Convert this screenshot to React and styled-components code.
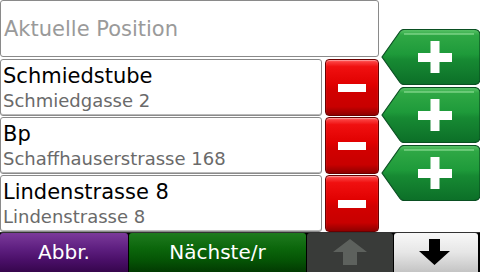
import React from "react";
import styled, { createGlobalStyle } from "styled-components";

const Global = createGlobalStyle`
  html, body { margin: 0; padding: 0; background: #fff; }
  body { width: 480px; height: 272px; overflow: hidden; font-family: "DejaVu Sans", "Liberation Sans", sans-serif; }
`;

const Screen = styled.div`
  width: 480px;
  height: 272px;
  display: flex;
  flex-direction: column;
  background: #fff;
`;

const Main = styled.div`
  height: 232px;
  display: flex;
`;

const LeftCol = styled.div`
  width: 380px;
  display: flex;
  flex-direction: column;
  gap: 1px;
`;

const TopField = styled.div`
  box-sizing: border-box;
  width: 379px;
  height: 57px;
  border: 1px solid #8a8a8a;
  border-radius: 3px;
  margin-bottom: 1px;
  padding: 16px 0 0 3px;
  font-size: 21px;
  color: #9a9a9a;
  white-space: nowrap;
`;

const Row = styled.div`
  height: 57px;
  display: flex;
  gap: 3px;
`;

const Entry = styled.div`
  box-sizing: border-box;
  width: 322px;
  height: 57px;
  border: 1px solid #8a8a8a;
  border-radius: 3px;
  padding: 3px 0 0 2px;
  display: flex;
  flex-direction: column;
  white-space: nowrap;
  box-shadow: inset 0 -1px 0 #bbb;
`;

const Title = styled.div`
  font-size: 21px;
  line-height: 26px;
  color: #000;
`;

const Sub = styled.div`
  font-size: 18px;
  line-height: 23px;
  color: #6a6a6a;
`;

const MinusBtn = styled.div`
  box-sizing: border-box;
  width: 54px;
  height: 57px;
  border: 1px solid #6a0000;
  border-radius: 4px;
  background: linear-gradient(#ff5050 0%, #f01010 12%, #e00000 45%, #d20000 55%, #c80000 85%, #900000 100%);
  display: flex;
  align-items: center;
  justify-content: center;
  box-shadow: inset 0 1px 1px rgba(255,200,200,0.6);
`;

const MinusBar = styled.div`
  width: 28px;
  height: 8px;
  background: #fff;
`;

const RightCol = styled.div`
  width: 100px;
  padding-top: 29px;
  display: flex;
  flex-direction: column;
  gap: 2px;
`;

const PlusWrap = styled.div`
  width: 100px;
  height: 56px;
`;

const Bottom = styled.div`
  height: 40px;
  display: flex;
  background: #000;
  gap: 1px;
  border-top: 1px solid #333;
  box-sizing: border-box;
`;

const BarBtn = styled.div`
  width: ${(p) => p.$w}px;
  display: flex;
  align-items: center;
  justify-content: center;
  color: #fff;
  font-size: 20px;
  padding-bottom: 2px;
  border-radius: 3px 3px 0 0;
  background: ${(p) => p.$bg};
`;

const PlusShape = () => (
  <svg width="100" height="56" viewBox="0 0 100 56">
    <defs>
      <linearGradient id="gg" x1="0" y1="0" x2="0" y2="1">
        <stop offset="0" stopColor="#5cc56a" />
        <stop offset="0.1" stopColor="#2fa845" />
        <stop offset="0.45" stopColor="#1e9a3a" />
        <stop offset="0.55" stopColor="#178a33" />
        <stop offset="1" stopColor="#0c6f28" />
      </linearGradient>
    </defs>
    <path
      d="M2 28 L20 2.5 Q21.5 0.5 24 0.5 L94 0.5 Q100 0.5 100 6 L100 50 Q100 55.5 94 55.5 L24 55.5 Q21.5 55.5 20 53.5 Z"
      fill="url(#gg)"
      stroke="#0a4f22"
      strokeWidth="1.2"
    />
    <path d="M24 5 L94 5" stroke="rgba(200,255,200,0.35)" strokeWidth="2" />
    <rect x="38" y="24" width="34" height="9" fill="#fff" />
    <rect x="50.5" y="12" width="9" height="32" fill="#fff" />
  </svg>
);

const Arrow = ({ up, color }) => (
  <svg width="34" height="26" viewBox="0 0 34 26">
    {up ? (
      <path d="M17 0 L34 13 L24 13 L24 26 L10 26 L10 13 L0 13 Z" fill={color} />
    ) : (
      <path d="M10 0 L21 0 L21 12 L31 12 L15.5 26 L0 12 L10 12 Z" fill={color} />
    )}
  </svg>
);

const rows = [
  { t: "Schmiedstube", s: "Schmiedgasse 2" },
  { t: "Bp", s: "Schaffhauserstrasse 168" },
  { t: "Lindenstrasse 8", s: "Lindenstrasse 8" },
];

export default function App() {
  return (
    <Screen>
      <Global />
      <Main>
        <LeftCol>
          <TopField>Aktuelle Position</TopField>
          {rows.map((r) => (
            <Row key={r.t}>
              <Entry>
                <Title>{r.t}</Title>
                <Sub>{r.s}</Sub>
              </Entry>
              <MinusBtn>
                <MinusBar />
              </MinusBtn>
            </Row>
          ))}
        </LeftCol>
        <RightCol>
          {[0, 1, 2].map((i) => (
            <PlusWrap key={i}>
              <PlusShape />
            </PlusWrap>
          ))}
        </RightCol>
      </Main>
      <Bottom>
        <BarBtn $w={128} $bg="linear-gradient(#7b3a9a, #5e1f80 40%, #4a0f68 70%, #36064d)">Abbr.</BarBtn>
        <BarBtn $w={177} $bg="linear-gradient(#1f7a1f, #0b660b 40%, #055405 70%, #023a02)">Nächste/r</BarBtn>
        <BarBtn $w={86} $bg="#393b39">
          <Arrow up color="#5d615d" />
        </BarBtn>
        <BarBtn $w={84} $bg="linear-gradient(#f8f8f8, #e6e6e6 50%, #c4c4c4)">
          <Arrow color="#000" />
        </BarBtn>
      </Bottom>
    </Screen>
  );
}
